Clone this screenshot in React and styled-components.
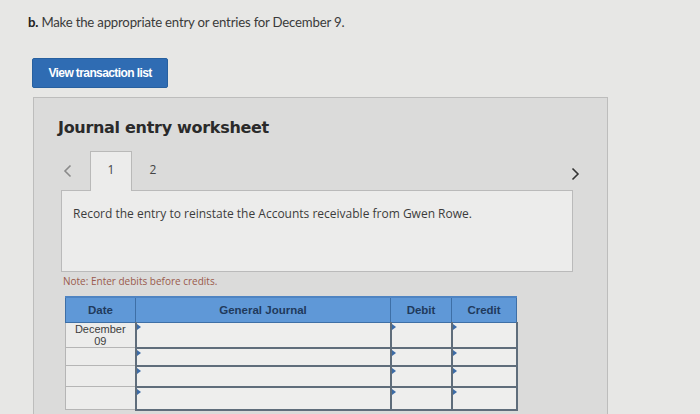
import React from "react";
import styled, { createGlobalStyle } from "styled-components";

const GlobalStyle = createGlobalStyle`
  html, body {
    margin: 0;
    padding: 0;
    background: #e7e7e5;
    overflow: hidden;
  }
  body {
    font-family: "Open Sans", "Liberation Sans", sans-serif;
    color: #333;
  }
`;

const Page = styled.div`
  width: 700px;
  height: 414px;
  padding: 12px 0 0 28px;
  box-sizing: border-box;
`;

const Heading = styled.p`
  margin: 0;
  font-family: Lato, "Open Sans", sans-serif;
  font-size: 13.2px;
  letter-spacing: -0.2px;
  line-height: 20px;
  color: #3a3a3a;
  b {
    color: #222;
  }
`;

const Button = styled.button`
  display: block;
  margin: 26px 0 0 4px;
  width: 136px;
  height: 30px;
  border: 1px solid #27609f;
  border-radius: 2px;
  background: #2f6cb3;
  color: #fff;
  font-family: "Liberation Sans", Arial, sans-serif;
  font-weight: bold;
  font-size: 12px;
  letter-spacing: -0.6px;
  padding: 0;
`;

const Panel = styled.section`
  margin: 9px 0 0 5px;
  width: 575px;
  height: 330px;
  box-sizing: border-box;
  background: #dbdbda;
  border: 1px solid #bdbdbc;
  padding: 18px 0 0 24px;
`;

const Title = styled.h2`
  margin: 0;
  font-family: "DejaVu Sans", Verdana, sans-serif;
  font-weight: bold;
  font-size: 16px;
  letter-spacing: -0.3px;
  line-height: 24px;
  color: #2a2a2a;
`;

const Worksheet = styled.div`
  margin: 11px 0 0 3px;
  width: 520px;
`;

const TabRow = styled.div`
  display: flex;
  align-items: center;
  height: 39px;
  position: relative;
  z-index: 1;
`;

const Arrow = styled.span`
  display: flex;
  width: 12px;
  justify-content: center;
  color: ${(p) => (p.$dim ? "#8a8a8a" : "#333")};
  margin: ${(p) => (p.$next ? "6px 0 0 auto" : "0 17px 0 0")};
`;

const Tab = styled.div`
  width: 42px;
  height: 40px;
  align-self: flex-start;
  box-sizing: border-box;
  display: flex;
  align-items: center;
  justify-content: center;
  padding-bottom: 4px;
  font-size: 12px;
  color: #444;
  background: ${(p) => (p.$active ? "#ececeb" : "transparent")};
  border: 1px solid ${(p) => (p.$active ? "#b9b9b8" : "transparent")};
  border-bottom: none;
`;

const Prompt = styled.div`
  width: 512px;
  height: 82px;
  box-sizing: border-box;
  background: #ececeb;
  border: 1px solid #bababa;
  padding: 15px 0 0 11px;
  font-size: 12px;
  line-height: 16px;
  color: #3c3c3c;
`;

const Note = styled.p`
  margin: 2px 0 0 2px;
  font-size: 10px;
  line-height: 14px;
  color: #9a5a4c;
`;

const Table = styled.table`
  margin: 8px 0 0 4px;
  width: 451px;
  border-collapse: collapse;
  table-layout: fixed;
  font-family: "Liberation Sans", Arial, sans-serif;
`;

const Th = styled.th`
  height: 24px;
  padding: 0;
  background: #5f98d7;
  border: 1px solid #3e6fa6;
  border-top: 2px solid #4f84c2;
  color: #1f3a5c;
  font-size: 11.5px;
  font-weight: bold;
`;

const DateCell = styled.td`
  height: ${(p) => p.$h}px;
  padding: 0;
  background: #ececeb;
  border-left: 1px solid #b5b5b5;
  border-bottom: 1px solid #b5b5b5;
  text-align: center;
  vertical-align: top;
  font-size: 11px;
  line-height: 12px;
  color: #3d3d3d;
`;

const InputCell = styled.td`
  position: relative;
  padding: 0;
  background: #eeeeed;
  border: 2px solid #5f6d7b;
  border-top-width: 1px;
  &::before {
    content: "";
    position: absolute;
    left: 0;
    top: 1px;
    border-top: 3px solid transparent;
    border-bottom: 3px solid transparent;
    border-left: 4px solid #3c6ba6;
  }
`;

const Chevron = ({ dir }) => (
  <svg width="9" height="14" viewBox="0 0 9 14">
    <path
      d={dir === "left" ? "M7.5 1.5 L2 7 L7.5 12.5" : "M1.5 1.5 L7 7 L1.5 12.5"}
      fill="none"
      stroke="currentColor"
      strokeWidth="1.6"
    />
  </svg>
);

const rows = [
  { h: 24, date: ["December", "09"] },
  { h: 17 },
  { h: 20 },
  { h: 22 },
];

export default function App() {
  return (
    <Page>
      <GlobalStyle />
      <Heading>
        <b>b.</b> Make the appropriate entry or entries for December 9.
      </Heading>
      <Button>View transaction list</Button>
      <Panel>
        <Title>Journal entry worksheet</Title>
        <Worksheet>
          <TabRow>
            <Arrow $dim>
              <Chevron dir="left" />
            </Arrow>
            <Tab $active>1</Tab>
            <Tab>2</Tab>
            <Arrow $next>
              <Chevron dir="right" />
            </Arrow>
          </TabRow>
          <Prompt>
            Record the entry to reinstate the Accounts receivable from Gwen Rowe.
          </Prompt>
          <Note>Note: Enter debits before credits.</Note>
          <Table>
            <colgroup>
              <col style={{ width: 70 }} />
              <col style={{ width: 255 }} />
              <col style={{ width: 61 }} />
              <col style={{ width: 65 }} />
            </colgroup>
            <thead>
              <tr>
                <Th>Date</Th>
                <Th>General Journal</Th>
                <Th>Debit</Th>
                <Th>Credit</Th>
              </tr>
            </thead>
            <tbody>
              {rows.map((r, i) => (
                <tr key={i}>
                  <DateCell $h={r.h}>
                    {r.date && (
                      <>
                        {r.date[0]}
                        <br />
                        {r.date[1]}
                      </>
                    )}
                  </DateCell>
                  <InputCell />
                  <InputCell />
                  <InputCell />
                </tr>
              ))}
            </tbody>
          </Table>
        </Worksheet>
      </Panel>
    </Page>
  );
}
